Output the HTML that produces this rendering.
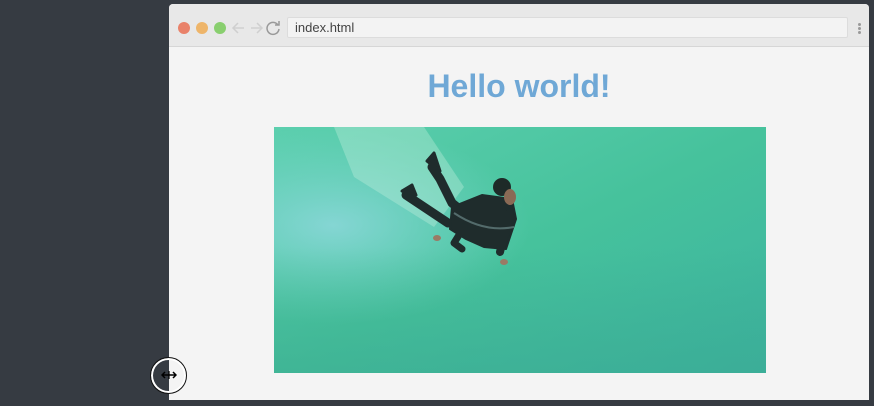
<!DOCTYPE html>
<html><head><style>
*{margin:0;padding:0;box-sizing:border-box}
body{width:874px;height:406px;background:#363b42;position:relative;overflow:hidden;font-family:"Liberation Sans",sans-serif}
.win{position:absolute;left:169px;top:4px;width:700px;height:396px;background:#f4f4f4;border-radius:4px 4px 0 0;overflow:hidden}
.bar{height:43px;background:#e8e8e8;border-bottom:1px solid #d6d6d6;position:relative}
.dot{position:absolute;top:18px;width:12px;height:12px;border-radius:50%}
.url{position:absolute;left:118px;top:13px;width:561px;height:21px;background:#f3f3f3;border:1px solid #dcdcdc;border-radius:2px;font-size:13px;color:#444;padding:2px 0 0 7px}
h1{position:absolute;left:0;width:700px;top:64px;text-align:center;font-size:32px;font-weight:bold;color:#6fa8d6}
.img{position:absolute;left:105px;top:123px}
</style></head><body>
<div class="win">
<div class="bar">
<div class="dot" style="left:9px;background:#e9826a"></div>
<div class="dot" style="left:27px;background:#eeb56a"></div>
<div class="dot" style="left:45px;background:#89cf6f"></div>
<svg style="position:absolute;left:62px;top:16px" width="50" height="16" fill="none" stroke-width="1.5">
<path d="M2 8h11M7 3L2 8l5 5" stroke="#cfcfcf"/>
<path d="M20 8h11M26 3l5 5-5 5" stroke="#cfcfcf"/>
<path d="M47 5a6 6 0 1 0 1 4" stroke="#999"/><path d="M44 5h4V1" stroke="#999"/>
</svg>
<div class="url">index.html</div>
<div style="position:absolute;left:689px;top:19px;width:3px;height:3px;background:#999;border-radius:50%;box-shadow:0 4px #999,0 8px #999"></div>
</div>
<h1>Hello world!</h1>
<svg class="img" width="492" height="246">
<defs>
<linearGradient id="g" x1="0" y1="0" x2="1" y2="1"><stop offset="0" stop-color="#5ccfae"/><stop offset=".5" stop-color="#46c29c"/><stop offset="1" stop-color="#3cb3a0"/></linearGradient>
<radialGradient id="s" cx=".12" cy=".4" r=".4"><stop offset="0" stop-color="#8ed8dc" stop-opacity=".85"/><stop offset="1" stop-color="#7fd8d0" stop-opacity="0"/></radialGradient>
<linearGradient id="b" x1="0" y1="0" x2="0" y2="1"><stop offset="0" stop-color="#3aa88c" stop-opacity="0"/><stop offset="1" stop-color="#3aa890" stop-opacity=".5"/></linearGradient>
</defs>
<rect width="492" height="246" fill="url(#g)"/>
<rect width="492" height="246" fill="url(#s)"/>
<rect y="120" width="492" height="126" fill="url(#b)"/>
<path d="M60 0L150 0 190 60 160 100 80 50z" fill="#c8f0e0" opacity=".35"/>
<g fill="#1f2c2c" stroke="#1f2c2c" stroke-linecap="round" stroke-linejoin="round">
<path d="M158 40l8 12 12 24 10 8" stroke-width="9" fill="none"/>
<path d="M132 68l12 8 18 12 12 8" stroke-width="9" fill="none"/>
<path d="M153 34l7 -8 6 18z" stroke-width="3"/>
<path d="M128 64l10 -6 4 10z" stroke-width="3"/>
<path d="M178 80l30 -12 30 4 4 20 -10 30 -22 -2 -18 -8 -16 -10z" stroke-width="2"/>
<path d="M190 100l-10 16 8 6" stroke-width="7" fill="none"/>
<path d="M236 85l-10 40" stroke-width="8" fill="none"/>
</g>
<path d="M180 86q30 20 60 14" stroke="#8aa" stroke-width="2" fill="none" opacity=".5"/>
<circle cx="228" cy="60" r="9" fill="#1e2a28"/>
<ellipse cx="236" cy="70" rx="6" ry="8" fill="#8a6a55"/>
<ellipse cx="230" cy="135" rx="4" ry="3" fill="#9a7a65"/>
<ellipse cx="163" cy="111" rx="4" ry="3" fill="#9a7a65"/>
</svg>
</div>
<div style="position:absolute;left:150px;top:357px;width:37px;height:37px;border:1.5px solid #111;border-radius:50%;box-shadow:inset 0 0 0 2px #fff"></div>
<svg style="position:absolute;left:161px;top:369px" width="16" height="12" fill="none" stroke="#000" stroke-width="1.5">
<path d="M1 6h14M4 3L1 6l3 3M12 3l3 3-3 3"/>
<path d="M8 2v8" stroke-width="1.2"/>
</svg>
</body></html>
